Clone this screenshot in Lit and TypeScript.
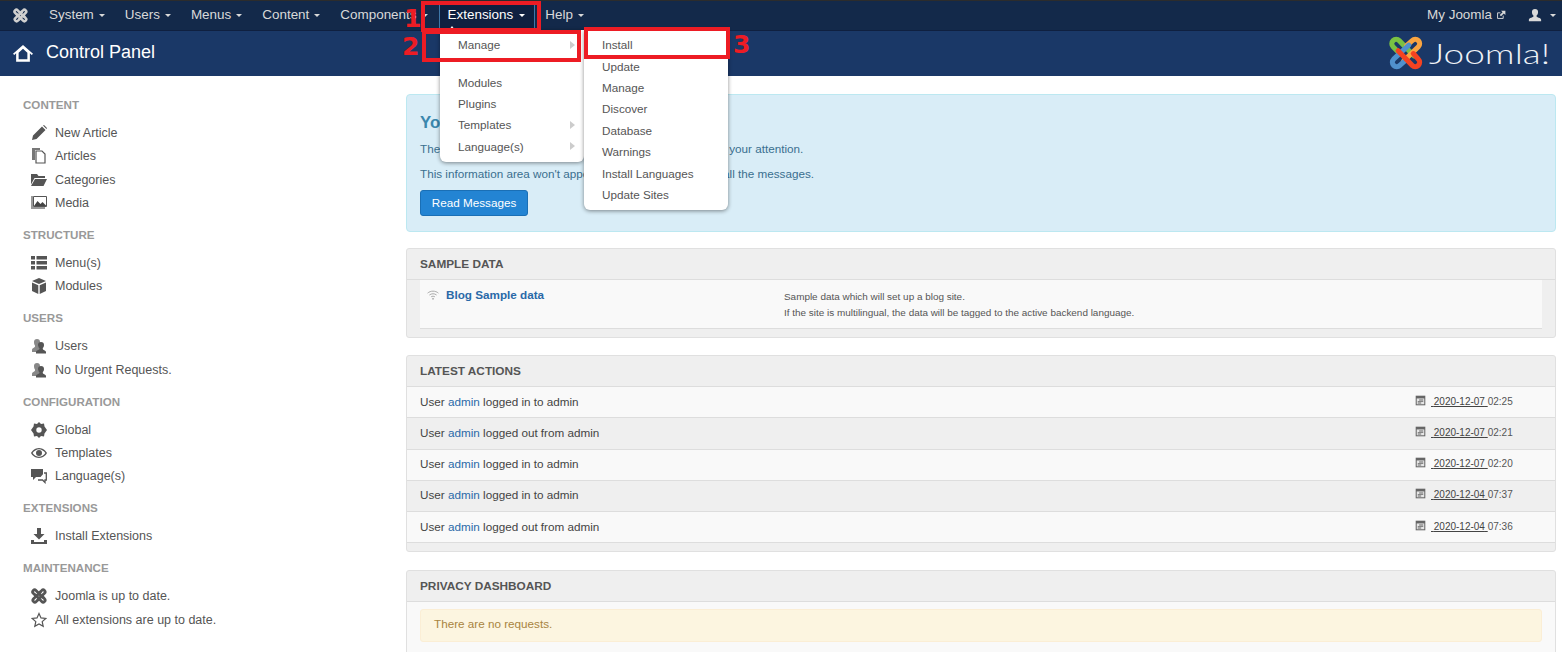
import { LitElement, html, css, svg } from 'lit';
import { customElement } from 'lit/decorators.js';

// the four arms of the Joomla knot, on a 64x64 grid
const KNOT = [
  'M19 31 9 21c-3-3-3-8 0-11s8-3 11 0l26 27',
  'M33 19l10-9c3-3 8-3 11 0s3 8 0 11L28 46',
  'M31 45 21 54c-3 3-8 3-11 0s-3-8 0-11l27-25',
  'M45 33l9 10c3 3 3 8 0 11s-8 3-11 0L18 28',
];
const KNOT_COLORS = ['#7ac143', '#f9a541', '#5091cd', '#f44321'];

// icons are drawn on a 16x16 grid
const ICONS: Record<string, unknown> = {
  joomla: svg`<g transform="scale(.25)" fill="none" stroke="currentColor" stroke-width="11" stroke-linecap="round" stroke-linejoin="round">${KNOT.map((d) => svg`<path d=${d} />`)}</g>`,
  home: svg`<path fill="currentColor" fill-rule="evenodd" d="M8 1.500 16 8.500l-1 1-1.500-1.300V15h-11V8.200L1 9.500l-1-1zM8 4.600 4.500 7.700V13h7V7.700z"/>`,
  pencil: svg`<path fill="currentColor" d="M1 15l1-4.500L11 1.500l3.500 3.500-9 9L1 15zM12 .5l1-.5 3 3-.5 1z"/>`,
  articles: svg`<path fill="#777" d="M1 0h8v2H4v10H1z"/><path fill="#fff" stroke="#555" stroke-width="1.2" d="M5 3h6l3 3v9H5z"/>`,
  folder: svg`<path fill="currentColor" d="M0 2h6l1.500 2H14v2H3.500L0 12.500zM4 7h12l-3.500 7H0z"/>`,
  media: svg`<path fill="#999" d="M0 1h2v11h12v2H0z"/><path fill="#fff" stroke="#555" d="M2.500 1.500h13v10h-13z"/><path fill="#444" d="M3 11l3.500-5 3 3 2-2 4 4z"/>`,
  list: svg`<path fill="currentColor" d="M0 1h4v3.500H0zM5.500 1H16v3.500H5.500zM0 6h4v3.500H0zM5.500 6H16v3.500H5.500zM0 11h4v3.500H0zM5.500 11H16v3.500H5.500z"/>`,
  cube: svg`<path fill="currentColor" d="M8 0l7 3-7 3-7-3zM1 4.500l6.300 2.700V16L1 13zM15 4.500 8.700 7.200V16L15 13z"/>`,
  users: svg`<path fill="#888" d="M6 1a3 3 0 0 1 3 3c0 2-1 3-1.500 3.500v1L9 9.500 7 14H1v-2c0-2 3-2.500 3-3.500v-1C3.500 7 3 6 3 4a3 3 0 0 1 3-3z"/><path fill="currentColor" d="M10 4a3 3 0 0 1 3 3c0 1.500-.6 2.500-1.200 3v1c0 1 3.200 1.500 3.200 3v1.500H5V14c0-1.500 3.200-2 3.200-3v-1C7.600 9.500 7 8.500 7 7a3 3 0 0 1 3-3z"/>`,
  gear: svg`<path fill="currentColor" fill-rule="evenodd" d="M8 0l2 2 3-.5.500 3L16 8l-2.500 3.500-.5 3-3-.5-2 2-2-2-3 .5-.5-3L0 8l2.500-3.500.5-3 3 .5zM8 5.300a2.700 2.700 0 1 0 0 5.400 2.700 2.700 0 0 0 0-5.400z"/>`,
  eye: svg`<path fill="currentColor" fill-rule="evenodd" d="M8 3c4 0 7 3 8 5-1 2-4 5-8 5s-7-3-8-5c1-2 4-5 8-5zM8 4.200C5.500 4.200 3 6 1.600 8 3 10 5.500 11.800 8 11.800S13 10 14.400 8C13 6 10.500 4.200 8 4.200zM8 5a3 3 0 1 1 0 6 3 3 0 0 1 0-6z"/>`,
  comments: svg`<path fill="currentColor" d="M0 1h12v8H5l-3 3V9H0z"/><path fill="#fff" stroke="currentColor" stroke-width="1.300" d="M13 5h2.300v7H14v2.500L11.500 12H7"/>`,
  download: svg`<path fill="currentColor" d="M6 0h4v6h3.500L8 11.500 2.500 6H6zM0 12h3v2h10v-2h3v4H0z"/>`,
  star: svg`<path fill="none" stroke="currentColor" stroke-width="1.200" d="M8 1.500l2 4.400 4.800.5-3.600 3.200 1 4.700L8 12l-4.200 2.300 1-4.700L1.200 6.400 6 5.900z"/>`,
  calendar: svg`<path fill="#666" d="M1 1h14v14H1z"/><path fill="#e6e6e6" d="M2.500 5h11v8.500h-11z"/><path fill="#666" d="M6 6.500h6V8H6zM4 9h8v1.300H4zM4 11h5v1.300H4z"/>`,
  wifi: svg`<g fill="none" stroke="currentColor" stroke-width="1.300"><path d="M.8 5.500C4.800 2 11.200 2 15.200 5.500"/><path d="M3.200 8C6 5.800 10 5.800 12.800 8"/><path d="M5.500 10.400c1.500-1 3.500-1 5 0"/></g><path fill="currentColor" d="M8 11.500 9.500 13 8 14.500 6.500 13z"/>`,
  external: svg`<path fill="none" stroke="currentColor" stroke-width="1.500" d="M11.500 9v4.500h-9v-9H7"/><path fill="currentColor" d="M8 1h7v7l-2.500-2.500L8 10 6 8l4.500-4.500z"/>`,
  user: svg`<path fill="currentColor" d="M8 1a3.500 3.500 0 0 1 3.500 3.500c0 2-.8 3.500-1.700 4.200v1.100c0 1 5.200 1.500 5.200 3.700V15H1v-1.500c0-2.200 5.200-2.700 5.200-3.700V8.700C5.300 8 4.500 6.500 4.500 4.500A3.500 3.500 0 0 1 8 1z"/>`,
};

const icon = (name: string, size = 16) =>
  html`<svg class="ico" viewBox="0 0 16 16" width=${size} height=${size}>${ICONS[name]}</svg>`;

const SIDEBAR: { title: string; items: [string, string][] }[] = [
  { title: 'CONTENT', items: [['pencil', 'New Article'], ['articles', 'Articles'], ['folder', 'Categories'], ['media', 'Media']] },
  { title: 'STRUCTURE', items: [['list', 'Menu(s)'], ['cube', 'Modules']] },
  { title: 'USERS', items: [['users', 'Users'], ['users', 'No Urgent Requests.']] },
  { title: 'CONFIGURATION', items: [['gear', 'Global'], ['eye', 'Templates'], ['comments', 'Language(s)']] },
  { title: 'EXTENSIONS', items: [['download', 'Install Extensions']] },
  { title: 'MAINTENANCE', items: [['joomla', 'Joomla is up to date.'], ['star', 'All extensions are up to date.']] },
];

const ACTIONS = [
  ['logged in to admin', '2020-12-07', '02:25'],
  ['logged out from admin', '2020-12-07', '02:21'],
  ['logged in to admin', '2020-12-07', '02:20'],
  ['logged in to admin', '2020-12-04', '07:37'],
  ['logged out from admin', '2020-12-04', '07:36'],
];

const NAV = ['System', 'Users', 'Menus', 'Content', 'Components', 'Extensions', 'Help'];
const MENU: [string, boolean][] = [['Modules', false], ['Plugins', false], ['Templates', true], ['Language(s)', true]];
const SUBMENU = ['Install', 'Update', 'Manage', 'Discover', 'Database', 'Warnings', 'Install Languages', 'Update Sites'];

@customElement('app-root')
export class AppRoot extends LitElement {
  static styles = css`
    :host {
      display: block;
      position: relative;
      height: 652px;
      overflow: hidden;
      background: #fff;
      color: #555;
      font-family: 'Liberation Sans', Arial, sans-serif;
      font-size: 12.5px;
    }
    .ico { display: block; flex: none; }

    /* top bar */
    .navbar {
      display: flex;
      align-items: center;
      height: 29px;
      background: #13294a;
      border-top: 1px solid #2c2c2c;
      color: #d9d9d9;
      font-size: 13.45px;
    }
    .brand { width: 39px; padding-left: 13px; box-sizing: border-box; color: #cfcfcf; }
    .nav-item {
      display: flex;
      align-items: center;
      height: 100%;
      box-sizing: border-box;
      padding: 0 10px 2px;
      white-space: nowrap;
    }
    .nav-item.active {
      background: #0f2040;
      color: #fff;
      box-shadow: inset 1px 0 #3f78a8, inset -1px 0 #3f78a8;
      padding: 0 10px 2px 9px;
      margin-left: 1px;
    }
    .nav-item.active .caret { margin-left: 6px; }
    .caret {
      width: 0;
      height: 0;
      margin-left: 5px;
      margin-top: 2px;
      border-left: 3.5px solid transparent;
      border-right: 3.5px solid transparent;
      border-top: 3.5px solid currentColor;
    }
    .nav-right { margin-left: auto; display: flex; align-items: center; padding-bottom: 2px; }
    .myj { display: flex; align-items: center; gap: 4px; margin-right: 22px; }
    .usr { display: flex; align-items: center; margin-right: 6px; gap: 3px; }

    /* title bar */
    .titlebar {
      display: flex;
      align-items: center;
      height: 46px;
      padding: 0 11px 2px 13px;
      background: #1a3867;
      border-top: 1px solid #0f2040;
      box-sizing: border-box;
      color: #fff;
      font-size: 18px;
    }
    .titlebar h1 { margin: 0 0 0 13px; font: inherit; }
    .logo { margin-left: auto; display: flex; align-items: center; gap: 5px; }
    .logo-text {
      display: block;
      width: 122px;
      margin-top: 3px;
      transform: scaleX(1.37);
      transform-origin: left center;
      font-family: Lato, 'Open Sans', sans-serif;
      font-weight: 300;
      font-size: 27px;
      line-height: 36px;
      color: #eef2f7;
    }

    .layout { display: grid; grid-template-columns: 406px 1150px; }

    /* sidebar */
    .sidebar { padding: 8.5px 0 0 23px; }
    .side-title {
      height: 20px;
      line-height: 20px;
      margin: 10.3px 0 6.3px;
      color: #999;
      font-weight: bold;
      font-size: 11.6px;
    }
    .side-item {
      display: flex;
      align-items: center;
      gap: 8px;
      height: 23.4px;
      padding-left: 8px;
      color: #555;
    }

    /* main column */
    .main { padding-top: 18px; display: flex; flex-direction: column; font-size: 11.7px; }
    .info {
      height: 138px;
      box-sizing: border-box;
      padding: 18px 13px;
      margin-bottom: 16px;
      background: #d9edf7;
      border: 1px solid #bce8f1;
      border-radius: 4px;
      color: #3a6f8f;
    }
    .info h2 { margin: 0 0 8px; font-size: 16.8px; line-height: 20px; color: #3a87ad; }
    .info p { margin: 0 0 10px; line-height: 15px; }
    .info p:last-of-type { margin-bottom: 9px; }
    .btn {
      display: block;
      box-sizing: border-box;
      width: 108px;
      height: 26px;
      line-height: 24px;
      text-align: center;
      background: #2384d3;
      border: 1px solid #1a6fb5;
      border-radius: 3px;
      color: #fff;
    }
    .panel {
      background: #efefef;
      border: 1px solid #e0e0e0;
      border-radius: 3px;
      margin-bottom: 17px;
    }
    .panel.wide-gap { margin-bottom: 18px; }
    .panel-head {
      height: 30px;
      line-height: 30px;
      padding-left: 13px;
      border-bottom: 1px solid #dddddd;
      font-weight: bold;
      font-size: 11.8px;
      color: #555;
    }
    .sample {
      display: grid;
      grid-template-columns: 364px 1fr;
      height: 48px;
      margin: 0 13px 8px;
      background: #f9f9f9;
      border-bottom: 1px solid #ddd;
    }
    .sample-link {
      display: flex;
      align-items: center;
      gap: 7px;
      height: 29px;
      padding-left: 7px;
      font-weight: bold;
      color: #2a69a8;
    }
    .sample-link .ico { color: #aaa; }
    .sample-desc { padding-top: 9px; font-size: 9.94px; line-height: 16px; color: #555; }
    .row {
      display: flex;
      align-items: center;
      justify-content: space-between;
      box-sizing: border-box;
      height: 31.25px;
      padding: 0 12px 2px 13px;
      border-bottom: 1px solid #ddd;
      background: #efefef;
      color: #444;
    }
    .row:nth-child(odd) { background: #f9f9f9; }
    .row a { color: #2a69a8; }
    .date { display: flex; align-items: center; width: 128px; font-size: 10px; color: #555; }
    .date .ico { margin-right: 5px; margin-top: -2px; }
    .date u { white-space: pre; color: #444; }
    .rows-end { height: 8px; }
    .privacy { background: #f9f9f9; padding: 7px 13px 20px; }
    .warn {
      height: 33px;
      line-height: 28px;
      box-sizing: border-box;
      padding-left: 13px;
      background: #fcf5e0;
      border: 1px solid #fbeed5;
      border-radius: 3px;
      color: #a8843f;
    }

    /* open menus */
    .menu {
      position: absolute;
      top: 30px;
      background: #fff;
      border-radius: 0 0 6px 6px;
      box-shadow: 0 1px 4px rgba(0, 0, 0, 0.45);
      color: #555;
      font-size: 11.7px;
    }
    .menu-main { left: 440px; width: 144px; height: 132px; }
    .menu-sub { left: 584px; width: 144px; height: 180px; }
    .menu-item {
      display: flex;
      align-items: center;
      justify-content: space-between;
      height: 21.4px;
      padding: 0 9px 0 18px;
    }
    .menu-main .first { margin-top: 4px; margin-bottom: 16px; }
    .menu-sub .menu-item:first-child { margin-top: 4px; }
    .arrow {
      width: 0;
      height: 0;
      border-top: 4px solid transparent;
      border-bottom: 4px solid transparent;
      border-left: 5px solid #ccc;
    }
    .notch {
      position: absolute;
      left: 449px;
      top: 26px;
      width: 0;
      height: 0;
      border-left: 3px solid transparent;
      border-right: 3px solid transparent;
      border-bottom: 4px solid #fff;
    }

    /* red annotations painted over the screenshot */
    .mark { position: absolute; box-sizing: border-box; border: 4px solid #ed1c24; }
    .num {
      position: absolute;
      color: #ed1c24;
      font-family: 'DejaVu Sans', sans-serif;
      font-weight: bold;
      font-size: 25px;
      line-height: 25px;
    }
    .m1 { left: 421px; top: 1px; width: 120px; height: 31px; }
    .m2 { left: 422px; top: 30px; width: 159px; height: 32px; }
    .m3 { left: 584px; top: 27px; width: 146px; height: 32px; }
    .n1 { left: 404px; top: 6px; }
    .n2 { left: 402px; top: 34px; }
    .n3 { left: 733px; top: 32px; }
  `;

  private renderNav() {
    return NAV.map(
      (n) => html`<div class="nav-item ${n === 'Extensions' ? 'active' : ''}">${n}<span class="caret"></span></div>`
    );
  }

  private renderMark() {
    return html`<svg class="ico" viewBox="0 0 64 64" width="36" height="36">
      <g fill="none" stroke-width="9" stroke-linecap="round" stroke-linejoin="round">
        ${KNOT.map((d, i) => svg`<path stroke=${KNOT_COLORS[i]} d=${d} />`)}
      </g>
    </svg>`;
  }

  render() {
    return html`
      <div class="navbar">
        <div class="brand">${icon('joomla', 15)}</div>
        ${this.renderNav()}
        <div class="nav-right">
          <div class="myj">My Joomla ${icon('external', 10)}</div>
          <div class="usr">${icon('user', 14)}<span class="caret"></span></div>
        </div>
      </div>
      <div class="titlebar">
        ${icon('home', 20)}
        <h1>Control Panel</h1>
        <div class="logo">${this.renderMark()}<span class="logo-text">Joomla!</span></div>
      </div>
      <div class="layout">
        <div class="sidebar">
          ${SIDEBAR.map(
            (s) => html`<div class="side-title">${s.title}</div>
              ${s.items.map(([i, t]) => html`<div class="side-item">${icon(i)}<span>${t}</span></div>`)}`
          )}
        </div>
        <div class="main">
          <div class="info">
            <h2>You have post-installation messages</h2>
            <p>There are important post-installation messages that require your attention.</p>
            <p>This information area won't appear when you have hidden all the messages.</p>
            <span class="btn">Read Messages</span>
          </div>
          <div class="panel">
            <div class="panel-head">SAMPLE DATA</div>
            <div class="sample">
              <div class="sample-link">${icon('wifi', 12)}<span>Blog Sample data</span></div>
              <div class="sample-desc">
                Sample data which will set up a blog site.<br />
                If the site is multilingual, the data will be tagged to the active backend language.
              </div>
            </div>
          </div>
          <div class="panel wide-gap">
            <div class="panel-head">LATEST ACTIONS</div>
            <div>
              ${ACTIONS.map(
                ([what, d, t]) => html`<div class="row">
                  <span>User <a>admin</a> ${what}</span>
                  <span class="date">${icon('calendar', 11)}<u> ${d} </u>${t}</span>
                </div>`
              )}
            </div>
            <div class="rows-end"></div>
          </div>
          <div class="panel">
            <div class="panel-head">PRIVACY DASHBOARD</div>
            <div class="privacy"><div class="warn">There are no requests.</div></div>
          </div>
        </div>
      </div>

      <div class="notch"></div>
      <div class="menu menu-main">
        <div class="menu-item first">Manage<span class="arrow"></span></div>
        ${MENU.map(([m, sub]) => html`<div class="menu-item">${m}${sub ? html`<span class="arrow"></span>` : ''}</div>`)}
      </div>
      <div class="menu menu-sub">
        ${SUBMENU.map((m) => html`<div class="menu-item">${m}</div>`)}
      </div>

      <div class="mark m1"></div>
      <div class="mark m2"></div>
      <div class="mark m3"></div>
      <span class="num n1">1</span>
      <span class="num n2">2</span>
      <span class="num n3">3</span>
    `;
  }
}
